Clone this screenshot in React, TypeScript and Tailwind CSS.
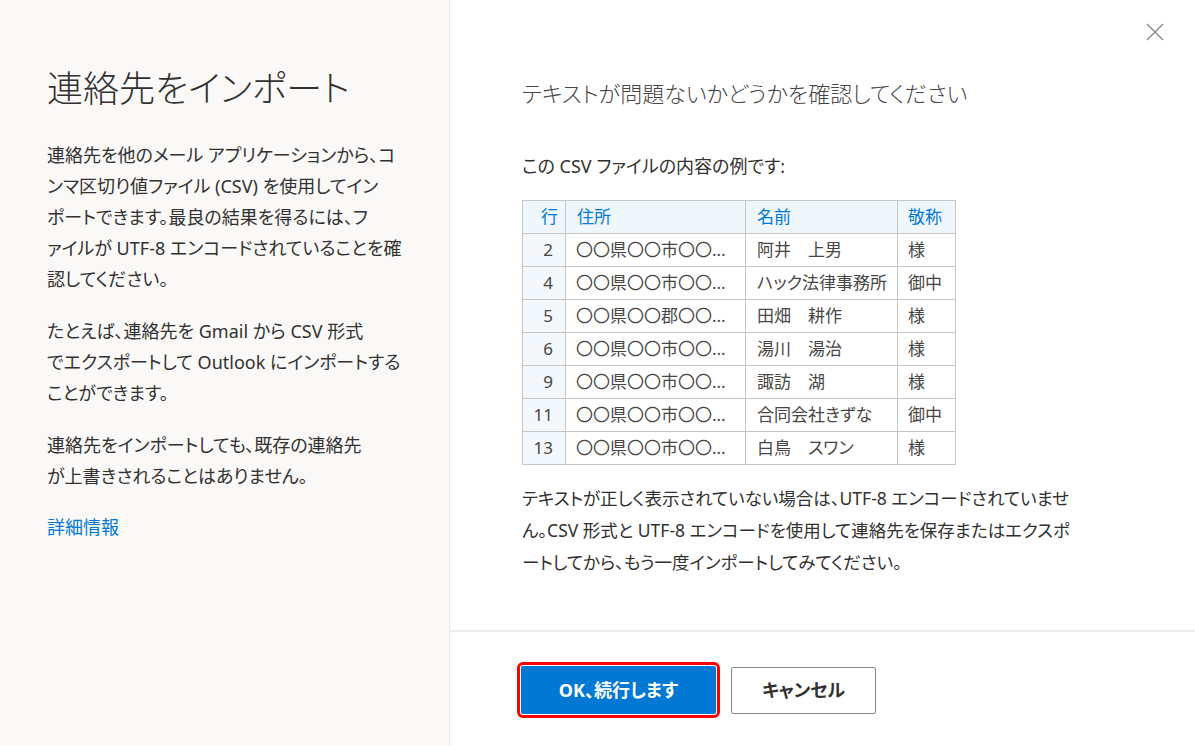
import React from 'react';

const rows = [
  { no: '2', addr: '〇〇県〇〇市〇〇...', name: '阿井　上男', title: '様' },
  { no: '4', addr: '〇〇県〇〇市〇〇...', name: 'ハック法律事務所', title: '御中' },
  { no: '5', addr: '〇〇県〇〇郡〇〇...', name: '田畑　耕作', title: '様' },
  { no: '6', addr: '〇〇県〇〇市〇〇...', name: '湯川　湯治', title: '様' },
  { no: '9', addr: '〇〇県〇〇市〇〇...', name: '諏訪　湖', title: '様' },
  { no: '11', addr: '〇〇県〇〇市〇〇...', name: '合同会社きずな', title: '御中' },
  { no: '13', addr: '〇〇県〇〇市〇〇...', name: '白鳥　スワン', title: '様' },
];

function Lines({ lines }: { lines: string[] }) {
  return (
    <>
      {lines.map((l, i) => (
        <span key={i} className="block whitespace-nowrap">
          {l}
        </span>
      ))}
    </>
  );
}

export default function App() {
  return (
    <div className="flex h-[746px] w-full overflow-hidden bg-white font-['Noto_Sans','Noto_Sans_CJK_JP',sans-serif] text-[#323130] [font-feature-settings:'palt']">
      {/* left info panel */}
      <aside className="w-[450px] shrink-0 border-r border-[#edebe9] bg-[#faf9f8] pl-[47px] pt-[65px]">
        <h1 className="text-[36px] font-light leading-[48px]">連絡先をインポート</h1>
        <p className="mt-[27px] text-[18px] leading-[31px]">
          <Lines
            lines={[
              '連絡先を他のメール アプリケーションから、コ',
              'ンマ区切り値ファイル (CSV) を使用してイン',
              'ポートできます。最良の結果を得るには、フ',
              'ァイルが UTF-8 エンコードされていることを確',
              '認してください。',
            ]}
          />
        </p>
        <p className="mt-[21px] text-[18px] leading-[31px]">
          <Lines
            lines={[
              'たとえば、連絡先を Gmail から CSV 形式',
              'でエクスポートして Outlook にインポートする',
              'ことができます。',
            ]}
          />
        </p>
        <p className="mt-[21px] text-[18px] leading-[31px]">
          <Lines lines={['連絡先をインポートしても、既存の連絡先', 'が上書きされることはありません。']} />
        </p>
        <a href="#" className="mt-[20px] block text-[18px] leading-[31px] text-[#0078d4]">
          詳細情報
        </a>
      </aside>

      {/* right content */}
      <main className="relative flex flex-1 flex-col">
        <button className="absolute right-[31px] top-[23px] flex h-[18px] w-[18px] items-center justify-center text-[#8a8886]">
          <svg viewBox="0 0 18 18" className="h-[18px] w-[18px]" fill="none" stroke="currentColor" strokeWidth="1.4">
            <path d="M1 1 L17 17 M17 1 L1 17" />
          </svg>
        </button>

        <div className="flex-1 pl-[72px] pt-[77px]">
          <h2 className="text-[22px] font-light leading-[32px] text-[#484644]">
            テキストが問題ないかどうかを確認してください
          </h2>
          <p className="mt-[43px] text-[18px] leading-[28px]">この CSV ファイルの内容の例です:</p>

          <table className="mt-[20px] table-fixed border-collapse text-[17px]">
            <colgroup>
              <col className="w-[43px]" />
              <col className="w-[180px]" />
              <col className="w-[152px]" />
              <col className="w-[58px]" />
            </colgroup>
            <thead>
              <tr className="h-[33px] bg-[#eff6fc] font-normal text-[#0078d4]">
                <th className="border border-[#c8c6c4] pr-[7px] text-right font-normal">行</th>
                <th className="border border-[#c8c6c4] pl-[11px] text-left font-normal">住所</th>
                <th className="border border-[#c8c6c4] pl-[11px] text-left font-normal">名前</th>
                <th className="border border-[#c8c6c4] pl-[10px] text-left font-normal">敬称</th>
              </tr>
            </thead>
            <tbody>
              {rows.map((r) => (
                <tr key={r.no} className="h-[33px] text-[#484644]">
                  <td className="border border-[#c8c6c4] bg-[#f3f8fd] pr-[12px] text-right">{r.no}</td>
                  <td className="whitespace-nowrap border border-[#c8c6c4] pl-[10px]">{r.addr}</td>
                  <td className="whitespace-nowrap border border-[#c8c6c4] pl-[11px]">{r.name}</td>
                  <td className="border border-[#c8c6c4] pl-[10px]">{r.title}</td>
                </tr>
              ))}
            </tbody>
          </table>

          <p className="mt-[17px] text-[17.5px] leading-[32px]">
            <Lines
              lines={[
                'テキストが正しく表示されていない場合は、UTF-8 エンコードされていませ',
                'ん。CSV 形式と UTF-8 エンコードを使用して連絡先を保存またはエクスポ',
                'ートしてから、もう一度インポートしてみてください。',
              ]}
            />
          </p>
        </div>

        <footer className="flex h-[116px] shrink-0 items-start gap-[15px] border-t-2 border-[#edebe9] pl-[71px] pt-[34px]">
          <button className="h-[48px] w-[195px] rounded-[2px] bg-[#0078d4] text-[18px] font-bold text-white outline-[3px] outline-offset-[1px] outline-[#ff0000] outline-solid">
            OK、続行します
          </button>
          <button className="mt-[1px] h-[47px] w-[145px] rounded-[2px] border border-[#8a8886] bg-white text-[18px] font-bold text-[#323130]">
            キャンセル
          </button>
        </footer>
      </main>
    </div>
  );
}
